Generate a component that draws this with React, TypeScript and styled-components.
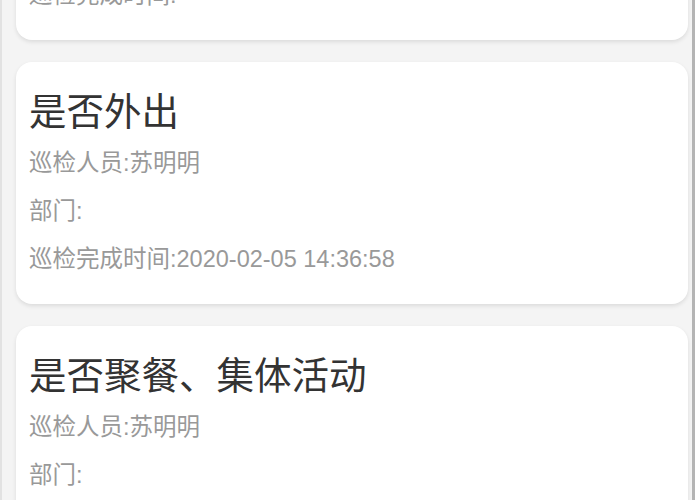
import React from "react";
import styled, { createGlobalStyle } from "styled-components";

const GlobalStyle = createGlobalStyle`
  html, body {
    margin: 0;
    padding: 0;
    background: #ffffff;
    overflow: hidden;
  }
  * { box-sizing: border-box; }
`;

const Frame = styled.div`
  display: flex;
  flex-direction: row;
  width: 700px;
  height: 500px;
  overflow: hidden;
  background: #ffffff;
`;

const Viewport = styled.div`
  flex: 1;
  height: 100%;
  overflow: hidden;
  background: #f4f4f4;
  border-left: 2px solid #e2e2e2;
  padding: 0 4px 0 14px;
`;

const Feed = styled.div`
  display: flex;
  flex-direction: column;
  gap: 22px;
  margin-top: -202px;
`;

const Card = styled.div`
  background: #ffffff;
  border-radius: 16px;
  box-shadow: 0 2px 4px rgba(0, 0, 0, 0.1);
  padding: 22px 13px 21px 13px;
  display: flex;
  flex-direction: column;
`;

const Title = styled.div`
  font-family: "Noto Sans CJK SC", "Liberation Sans", sans-serif;
  font-size: 37.5px;
  line-height: 50px;
  color: #333333;
  margin-bottom: 5px;
  white-space: nowrap;
`;

const Field = styled.div<{ $last?: boolean }>`
  font-family: "Liberation Sans", "Noto Sans CJK SC", sans-serif;
  font-size: 23.5px;
  line-height: 48px;
  color: #999999;
  white-space: nowrap;
`;

const ScrollTrack = styled.div`
  width: 3px;
  height: 100%;
  background: #b4b4b4;
`;

const Gutter = styled.div`
  width: 5px;
  height: 100%;
  background: #ffffff;
`;

type Record = {
  title: string;
  inspector: string;
  dept: string;
  time: string;
};

const records: Record[] = [
  { title: "是否发热", inspector: "苏明明", dept: "", time: "" },
  { title: "是否外出", inspector: "苏明明", dept: "", time: "2020-02-05 14:36:58" },
  { title: "是否聚餐、集体活动", inspector: "苏明明", dept: "", time: "2020-02-05 14:36:58" },
];

export default function App() {
  return (
    <>
      <GlobalStyle />
      <Frame>
        <Viewport>
          <Feed>
            {records.map((r, i) => (
              <Card key={i}>
                <Title>{r.title}</Title>
                <Field>巡检人员:{r.inspector}</Field>
                <Field>部门:{r.dept}</Field>
                <Field>巡检完成时间:{r.time}</Field>
              </Card>
            ))}
          </Feed>
        </Viewport>
        <ScrollTrack />
        <Gutter />
      </Frame>
    </>
  );
}
